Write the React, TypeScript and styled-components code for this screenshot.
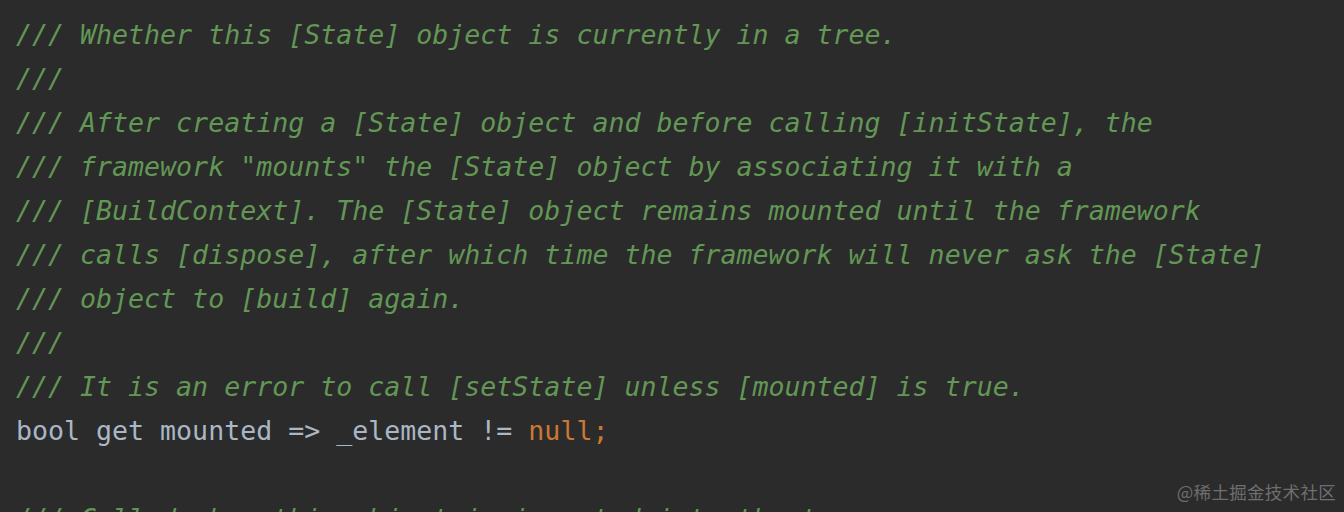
import React from "react";
import styled, { createGlobalStyle } from "styled-components";

const Global = createGlobalStyle`
  html, body {
    margin: 0;
    padding: 0;
    background: #2b2b2b;
    overflow: hidden;
  }
`;

const Editor = styled.div`
  position: relative;
  width: 1344px;
  height: 512px;
  overflow: hidden;
  background: #2b2b2b;
  box-sizing: border-box;
  padding: 13px 0 0 16px;
  font-family: "DejaVu Sans Mono", "Liberation Mono", monospace;
  font-size: 26.6px;
`;

const Line = styled.div`
  height: 44px;
  line-height: 44px;
  white-space: pre;
  color: #a9b7c6;
`;

const Doc = styled.span`
  color: #629755;
  font-style: italic;
`;

const Keyword = styled.span`
  color: #cc7832;
`;

const Watermark = styled.div`
  position: absolute;
  right: 8px;
  bottom: 8px;
  font-family: "Noto Sans CJK SC", "Noto Sans", sans-serif;
  font-size: 17.5px;
  color: #6e6e6e;
  letter-spacing: 0.3px;
`;

const docLines: string[] = [
  "/// Whether this [State] object is currently in a tree.",
  "///",
  "/// After creating a [State] object and before calling [initState], the",
  '/// framework "mounts" the [State] object by associating it with a',
  "/// [BuildContext]. The [State] object remains mounted until the framework",
  "/// calls [dispose], after which time the framework will never ask the [State]",
  "/// object to [build] again.",
  "///",
  "/// It is an error to call [setState] unless [mounted] is true.",
];

export default function App() {
  return (
    <>
      <Global />
      <Editor>
        {docLines.map((l, i) => (
          <Line key={i}>
            <Doc>{l}</Doc>
          </Line>
        ))}
        <Line>
          {"bool get mounted => _element != "}
          <Keyword>null;</Keyword>
        </Line>
        <Line />
        <Line>
          <Doc>/// Called when this object is inserted into the tree.</Doc>
        </Line>
        <Watermark>@稀土掘金技术社区</Watermark>
      </Editor>
    </>
  );
}
